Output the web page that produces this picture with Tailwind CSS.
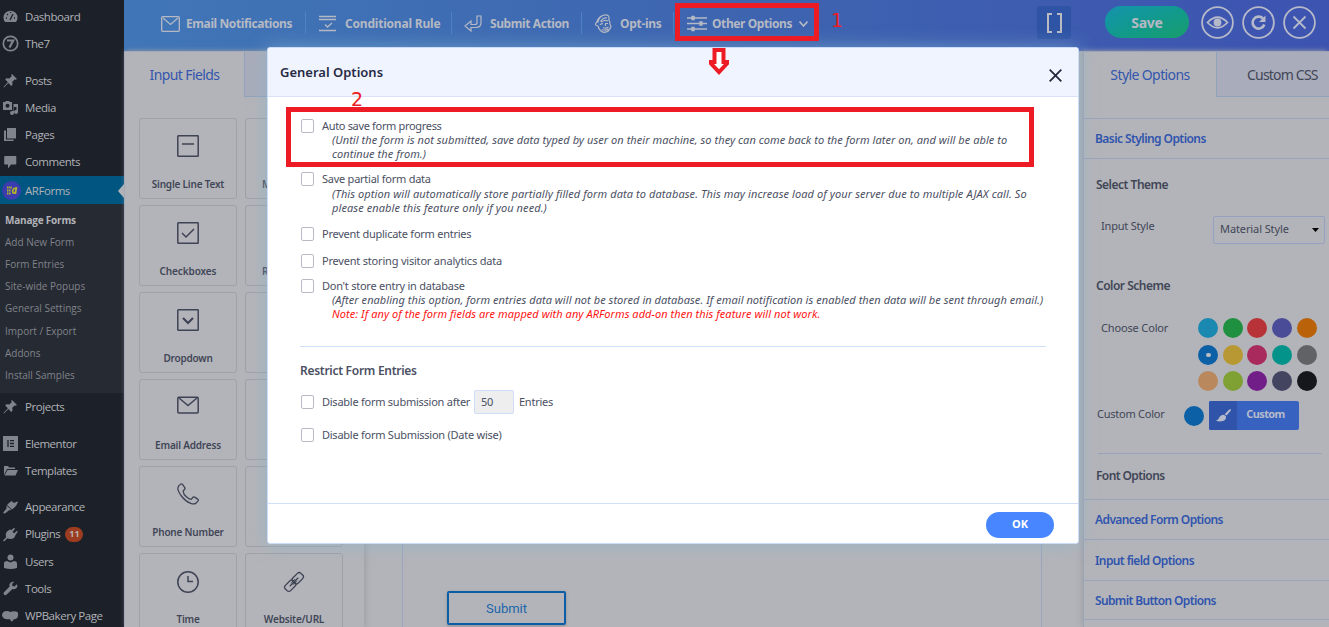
<!DOCTYPE html>
<html lang="en">
<head>
<meta charset="utf-8">
<title>ARForms</title>
<script src="https://cdn.jsdelivr.net/npm/@tailwindcss/browser@4"></script>
</head>
<body class="relative flex h-[627px] w-[1329px] overflow-hidden bg-[#b3b4b9] font-['Noto_Sans',sans-serif] text-[11px] text-[#414657]">

<!-- WordPress menu -->
<nav class="flex h-[627px] w-[124px] shrink-0 flex-col overflow-hidden bg-[#1c2028] pt-[3px] font-['Open_Sans',sans-serif] text-[11.500px] tracking-[-0.45px] text-[#b0b2b7]">
  <a class="flex h-[27px] shrink-0 items-center gap-[7px] pl-[3px]"><svg class="h-[15px] w-[15px]" viewBox="0 0 15 15" fill="#80848c"><path d="M2 13a7 7 0 1 1 11 0z"/><path d="M7 11l3-6M3 9h1M4 5l1 1M7.500 3v1M12 9h-1" stroke="#1c2028" stroke-width="1.300"/></svg>Dashboard</a>
  <a class="flex h-[27px] shrink-0 items-center gap-[6px] pl-[2px]"><svg class="h-[17px] w-[17px]" viewBox="0 0 17 17" fill="none" stroke="#80848c" stroke-width="1.700"><circle cx="8.500" cy="8.500" r="7.200"/><path d="M5 5.500h6.200L7.500 12.500" stroke-width="2.200"/></svg>The7</a>
  <a class="mt-[10px] flex h-[27px] shrink-0 items-center gap-[7px] pl-[3px]"><svg class="h-[15px] w-[15px]" viewBox="0 0 15 15" fill="#80848c"><path d="M9 1l5 5-1.500.8-1-.4-2.200 2.400.2 3-1.300 1.100-2.800-2.900L1 14.500.5 14l4.400-4.700L2.200 6.500l1.200-1.200 2.900.2L8.700 3.200 8.200 2z"/></svg>Posts</a>
  <a class="flex h-[27px] shrink-0 items-center gap-[7px] pl-[3px]"><svg class="h-[15px] w-[15px]" viewBox="0 0 15 15" fill="#80848c"><path d="M0 2h2l1-1h3l1 1h2v8H0z"/><circle cx="4.500" cy="5.800" r="2" fill="#1c2028"/><path d="M10.500 4H15v8a2 2 0 1 1-1.500-2V7h-2.500v6a2 2 0 1 1-2-2h1.500z"/></svg>Media</a>
  <a class="flex h-[27px] shrink-0 items-center gap-[7px] pl-[3px]"><svg class="h-[15px] w-[15px]" viewBox="0 0 15 15" fill="#80848c"><path d="M4 1h9v10.500H4z"/><path d="M1 3.500h2v9h7.500v1.500H1z"/></svg>Pages</a>
  <a class="flex h-[27px] shrink-0 items-center gap-[7px] pl-[3px]"><svg class="h-[15px] w-[15px]" viewBox="0 0 15 15" fill="#80848c"><path d="M2 2h10.500q.8 0 .8.800v7q0 .800-.800.800H8L5 14.500V10.600H2q-.800 0-.800-.800v-7Q1.200 2 2 2z"/></svg>Comments</a>
  <a class="mt-px flex h-[28px] shrink-0 items-center bg-[#005581] pt-px pl-[2px]"><svg class="mr-[4px] h-[19px] w-[19px]" viewBox="0 0 19 19"><circle cx="9.500" cy="9.500" r="9.500" fill="#3b3cae"/><path d="M5 6.500h5M5 9.500h4M5 12.500h4" stroke="#b5b529" stroke-width="1.800" stroke-dasharray="1.500 .6"/><path d="M14.500 6l-1.200 7M13.800 7.500c-3-1.500-4.500 5-1.500 4.500l1.200-1.200" fill="none" stroke="#b5b529" stroke-width="1.700"/></svg>ARForms<svg class="ml-auto h-[14px] w-[6px]" viewBox="0 0 6 14" fill="#b3b4b9"><path d="M6 0v14L0 7z"/></svg></a>
  <div class="flex h-[189px] shrink-0 flex-col bg-[#262a33] pt-[5px] pl-[5px] text-[10px] tracking-[0px] text-[#80838a]">
    <a class="flex h-[22.200px] items-center font-bold tracking-[-0.2px] text-[#b3b4b9]">Manage Forms</a>
    <a class="flex h-[22.200px] items-center">Add New Form</a>
    <a class="flex h-[22.200px] items-center">Form Entries</a>
    <a class="flex h-[22.200px] items-center">Site-wide Popups</a>
    <a class="flex h-[22.200px] items-center">General Settings</a>
    <a class="flex h-[22.200px] items-center">Import / Export</a>
    <a class="flex h-[22.200px] items-center">Addons</a>
    <a class="flex h-[22.200px] items-center">Install Samples</a>
  </div>
  <a class="flex h-[27px] shrink-0 items-center gap-[7px] pl-[3px]"><svg class="h-[15px] w-[15px]" viewBox="0 0 15 15" fill="#80848c"><path d="M9 1l5 5-1.500.8-1-.4-2.200 2.400.2 3-1.300 1.100-2.800-2.900L1 14.500.5 14l4.400-4.700L2.200 6.500l1.200-1.200 2.900.2L8.700 3.200 8.200 2z"/></svg>Projects</a>
  <a class="mt-[10px] flex h-[27px] shrink-0 items-center gap-[7px] pl-[3px]"><svg class="h-[15px] w-[15px]" viewBox="0 0 15 15" fill="#80848c"><path d="M0 0h15v15H0z"/><path d="M5 4v7M7 4.700h4M7 7.500h4M7 10.300h4" stroke="#1c2028" stroke-width="1.300"/></svg>Elementor</a>
  <a class="flex h-[27px] shrink-0 items-center gap-[7px] pl-[3px]"><svg class="h-[15px] w-[15px]" viewBox="0 0 15 15" fill="#80848c"><path d="M1 12V3h4l1 1.500h6V6H4z"/><path d="M4.500 7H15l-2.500 5.500H1.500z"/></svg>Templates</a>
  <a class="mt-[9px] flex h-[27px] shrink-0 items-center gap-[7px] pl-[3px]"><svg class="h-[15px] w-[15px]" viewBox="0 0 15 15" fill="#80848c"><path d="M6 4l2.500-2L11 4l3-1.500 1 .5-1.500 3-1.500 2-3 2.500L4 6z"/><path d="M3.500 6.500l5 4.500-2.500.2L2 14.500q-1.500.3-1.800-1L3.500 9.500z"/></svg>Appearance</a>
  <a class="flex h-[28px] shrink-0 items-center gap-[7px] pl-[3px]"><svg class="h-[15px] w-[15px]" viewBox="0 0 15 15" fill="#80848c"><path d="M6 3l1.500-.5L12.500 8q-1 4-5 4-2 0-3-.8L1 14.500 0 13.500l3.200-3.300Q1.500 5.500 6 3zM8 3.500L11 .8l1 1L9.500 5zM11 6.500l2.800-2.800 1 1L12.500 8z"/></svg>Plugins<span class="-ml-[2px] flex h-[15px] w-[18px] items-center justify-center rounded-full bg-[#9c3d22] text-[9px] font-bold tracking-normal text-[#b9b4b2]">11</span></a>
  <a class="flex h-[27px] shrink-0 items-center gap-[7px] pl-[3px]"><svg class="h-[15px] w-[15px]" viewBox="0 0 15 15" fill="#80848c"><circle cx="7.500" cy="3.500" r="3"/><path d="M1 14V9.500q0-2.500 3-2.500l3.500 1.500L11 7q3 0 3 2.500V14q-6 2-13 0z"/></svg>Users</a>
  <a class="flex h-[27px] shrink-0 items-center gap-[7px] pl-[3px]"><svg class="h-[15px] w-[15px]" viewBox="0 0 15 15" fill="#80848c"><path d="M13.800 3.200L11.500 5.500l-2-.5-.5-2L11.300.8Q8 0 6.600 3q-.4 1.300 0 2.500L.8 11.600q-.8 1.200.3 2.200 1.200.9 2.300 0L9.500 8q4 .7 4.900-2.500.1-1.300-.6-2.300z"/></svg>Tools</a>
  <a class="flex h-[27px] shrink-0 items-center gap-[6px] pl-[2px]"><svg class="h-[15px] w-[17px]" viewBox="0 0 17 15" fill="#80848c"><path d="M0 7.500Q0 3 5 3q2 0 3 1 5-1.500 8 .5v3Q16 11 11.500 11.500q-.5 2-2 2-.8-1.500-2-2.500Q1 12 0 7.500z"/></svg><span class="whitespace-nowrap">WPBakery Page</span></a>
  <span class="-mt-[5px] pl-[25px]">Builder</span>
</nav>

<div class="flex min-w-0 flex-1 flex-col">
  <!-- Toolbar -->
  <header class="flex h-[51px] shrink-0 items-start bg-linear-to-r from-[#4076b7] via-[#3e65b0] to-[#3d53b0] text-[12px] font-bold tracking-[-0.4px] text-[#b5b9c4]">
    <div class="mt-[12px] flex h-[22px] w-[182px] items-center gap-[6px] border-r border-[#4d83c0] pt-px pl-[37px] whitespace-nowrap"><svg class="h-[16px] w-[19px] shrink-0" viewBox="0 0 19 16" fill="none" stroke="#b5b9c4" stroke-width="1.300"><rect x=".7" y=".7" width="17.600" height="14.600" rx="1"/><path d="M2 2l7.500 6.500L17 2"/></svg>Email Notifications</div>
    <div class="mt-[12px] flex h-[22px] w-[146px] items-center gap-[9px] border-r border-[#4d83c0] pt-px pl-[13px] tracking-[-0.2px] whitespace-nowrap"><svg class="h-[17px] w-[17px] shrink-0" viewBox="0 0 17 17" fill="none" stroke="#b5b9c4" stroke-width="1.300"><path d="M0 1.500h17M0 4.500h17M0 15.500h17M6 9.500l2.500 2.500L13 8M0 12.500"/></svg>Conditional Rule</div>
    <div class="mt-[12px] flex h-[22px] w-[130px] items-center gap-[8px] border-r border-[#4d83c0] pt-px pl-[12px] whitespace-nowrap"><svg class="h-[17px] w-[18px] shrink-0" viewBox="0 0 18 17" fill="none" stroke="#b5b9c4" stroke-width="1.200"><path d="M17 1h-4v6.500q0 2-2 2H7V6L1 11l6 5v-3.500h5q5 0 5-5z"/></svg>Submit Action</div>
    <div class="mt-[12px] flex h-[22px] w-[92px] items-center gap-[8px] border-r border-[#4d83c0] pt-px pl-[13px] tracking-[-0.3px] whitespace-nowrap"><svg class="h-[19px] w-[17px] shrink-0" viewBox="0 0 17 19" fill="none" stroke="#b5b9c4" stroke-width="1.200"><path d="M3 12Q-.5 11.500 1 9q1-1.500 2-1Q4 3 8.500 1.300q3-1 4.800.5 1.200 1.500.5 4 1.500 2 1 4.200l1.200 2.500Q14 18.500 9 18.300 4.500 17.500 3 12zM2 7.500Q3.500 2.500 9 1M5.500 7.500Q8 3.500 12 4M6 8q4-2.500 7-1M5 11q1.500-2 3-1M10 9.500h3M8 13.500q3 1.500 5.500-.5M7 15.500q3.500 1.500 6.500-.5M10.500 10v2"/></svg>Opt-ins</div>
    <div class="mt-[12px] flex h-[22px] items-center pt-px pl-[13px] whitespace-nowrap"><svg class="mr-[5px] h-[17px] w-[20px] shrink-0" viewBox="0 0 20 17" fill="#b5b9c4" stroke="#b5b9c4" stroke-width="1.400"><path d="M0 3h20M0 8.500h20M0 14h20"/><path d="M5 1.500h2v3H5zM13 7h2v3h-2zM5 12.500h2v3H5z"/></svg>Other Options<svg class="ml-[7px] h-[8px] w-[9px]" viewBox="0 0 9 8" fill="none" stroke="#b5b9c4" stroke-width="1.700"><path d="M.5 1.500l4 4.500 4-4.500"/></svg></div>
    <div class="mt-[6px] mr-[34px] ml-auto flex h-[33px] w-[34px] items-center justify-center rounded-[3px] bg-[#2f54a5]"><svg class="h-[20px] w-[17px]" viewBox="0 0 17 20" fill="none" stroke="#b9bbc2" stroke-width="2"><path d="M6 1H2v18h4M11 1h4v18h-4"/></svg></div>
    <div class="mt-[6px] flex h-[32px] w-[84px] items-center justify-center rounded-full bg-linear-to-br from-[#1593ad] to-[#189e6a] text-[14px] tracking-[-0.3px]">Save</div>
    <svg class="mt-[6px] ml-[12px] h-[33px] w-[33px]" viewBox="0 0 33 33" fill="none" stroke="#b5b9c9" stroke-width="1.800"><circle cx="16.500" cy="16.500" r="15.400"/><path d="M6.500 16.500Q16.500 6 26.500 16.500 16.500 27 6.500 16.500z"/><circle cx="16.500" cy="16.500" r="3" fill="#b5b9c9"/></svg>
    <svg class="mt-[6px] ml-[8px] h-[33px] w-[33px]" viewBox="0 0 33 33" fill="none" stroke="#b5b9c9" stroke-width="1.800"><circle cx="16.500" cy="16.500" r="15.400"/><path d="M21 12.500a6 6 0 1 0 1.300 6" stroke-width="2.600"/><path d="M23.500 9.500v6.500h-6.500z" fill="#b5b9c9" stroke="none"/></svg>
    <svg class="mt-[6px] mr-[13px] ml-[8px] h-[33px] w-[33px]" viewBox="0 0 33 33" fill="none" stroke="#b5b9c9" stroke-width="1.800"><circle cx="16.500" cy="16.500" r="15.400"/><path d="M10.500 10.500l12 12M22.500 10.500l-12 12"/></svg>
  </header>

  <div class="flex min-h-0 flex-1">
    <!-- Field palette -->
    <section class="relative flex w-[240px] shrink-0 flex-col overflow-visible border-t border-l border-[#a4a9b5] shadow-[2px_0_5px_#9fa1a8]">
      <div class="flex h-[45px] shrink-0">
        <div class="flex w-[119px] items-center justify-center text-[14px] tracking-[-0.6px] text-[#3356ad]"><span>Input Fields</span></div>
        <div class="flex-1 border-b border-l border-[#91a3bb] bg-[#a9acba]"></div>
      </div>
      <div class="mt-[21px] ml-[14px] grid grid-cols-[98px_98px] gap-x-[8px] gap-y-[6px] text-[10px] font-semibold tracking-[-0.2px]">
        <div class="flex h-[81px] flex-col items-center rounded-[3px] border border-[#9fa1a8] pt-[16px]"><svg class="h-[22px] w-[22px]" viewBox="0 0 22 22" fill="none" stroke="#3e4355" stroke-width="1.500"><rect x=".8" y=".8" width="20.400" height="20.400" rx=".5"/><path d="M5 9h12"/></svg><span class="mt-[20px]">Single Line Text</span></div>
        <div class="flex h-[81px] flex-col rounded-[3px] border border-[#9fa1a8] pt-[58px] pl-[16px]">M</div>
        <div class="flex h-[81px] flex-col items-center rounded-[3px] border border-[#9fa1a8] pt-[16px]"><svg class="h-[22px] w-[22px]" viewBox="0 0 22 22" fill="none" stroke="#3e4355" stroke-width="1.500"><rect x=".8" y=".8" width="20.400" height="20.400" rx=".5"/><path d="M5 11l4 4 8-8"/></svg><span class="mt-[20px] tracking-[-0.1px]">Checkboxes</span></div>
        <div class="flex h-[81px] flex-col rounded-[3px] border border-[#9fa1a8] pt-[58px] pl-[16px]">R</div>
        <div class="flex h-[81px] flex-col items-center rounded-[3px] border border-[#9fa1a8] pt-[16px]"><svg class="h-[22px] w-[22px]" viewBox="0 0 22 22" fill="none" stroke="#3e4355" stroke-width="1.500"><rect x=".8" y=".8" width="20.400" height="20.400" rx=".5"/><path d="M6 9l5 5 5-5" stroke-width="2.200"/></svg><span class="mt-[20px]">Dropdown</span></div>
        <div class="h-[81px] rounded-[3px] border border-[#9fa1a8]"></div>
        <div class="flex h-[81px] flex-col items-center rounded-[3px] border border-[#9fa1a8] pt-[16px]"><svg class="h-[18px] w-[22px]" viewBox="0 0 22 18" fill="none" stroke="#3e4355" stroke-width="1.500"><rect x=".8" y="1.300" width="20.400" height="15.800" rx="1"/><path d="M2 2l9 7.500L20 2"/></svg><span class="mt-[24px]">Email Address</span></div>
        <div class="h-[81px] rounded-[3px] border border-[#9fa1a8]"></div>
        <div class="flex h-[81px] flex-col items-center rounded-[3px] border border-[#9fa1a8] pt-[16px]"><svg class="h-[22px] w-[22px]" viewBox="0 0 22 22" fill="none" stroke="#3e4355" stroke-width="1.300"><path d="M3.500 1.200q1.200-.8 2 .2l2.300 3.200q.6 1-.3 1.900L6.300 7.800q-.4 3 3.300 6.300 3 2.700 4.800 2.200l1.300-1.800q.8-1 2-.4l3 2q1.200.9.200 2l-1.800 2q-2 1.400-5.300.2Q8 18 4 12.500.8 7.800.8 5.500.8 3 3.500 1.200z"/></svg><span class="mt-[20px]">Phone Number</span></div>
        <div class="h-[81px] rounded-[3px] border border-[#9fa1a8]"></div>
        <div class="flex h-[81px] flex-col items-center rounded-[3px] border border-[#9fa1a8] pt-[17px]"><svg class="h-[22px] w-[22px]" viewBox="0 0 22 22" fill="none" stroke="#3e4355" stroke-width="1.500"><circle cx="11" cy="11" r="10.200"/><path d="M11 5v5.500h5"/></svg><span class="mt-[19px]">Time</span></div>
        <div class="flex h-[81px] flex-col items-center rounded-[3px] border border-[#9fa1a8] pt-[17px]"><svg class="h-[22px] w-[22px]" viewBox="0 0 22 22" fill="none" stroke="#3e4355" stroke-width="1.300"><g transform="rotate(-45 11 11)"><rect x="10.500" y="7.300" width="11.500" height="7.400" rx="2.500"/><rect x="0" y="7.300" width="11.500" height="7.400" rx="2.500"/><path d="M5 11h12"/><path d="M8 9.800h6M8 12.200h6" stroke-width=".9"/></g></svg><span class="mt-[19px]">Website/URL</span></div>
      </div>
    </section>

    <!-- Form canvas -->
    <main class="flex flex-1 border-t border-[#a4a9b5] pr-[41px] pl-[38px]">
      <div class="flex flex-1 items-start border-x border-[#9ba5bf] pt-[539px] pl-[44px]">
        <button class="h-[34px] w-[119px] rounded-[2px] border-2 border-[#0b5da5] pt-px font-[Roboto,sans-serif] text-[13px] text-[#1b66ac] shadow-[0_1px_3px_#8b8f98]">Submit</button>
      </div>
    </main>

    <!-- Style panel -->
    <aside class="flex w-[246px] shrink-0 flex-col border-t border-l border-[#9ca4b6] shadow-[-2px_0_5px_#a2a4ab]">
      <div class="flex h-[45px] shrink-0 text-[14px] tracking-[-0.6px]">
        <div class="flex w-[132px] items-center justify-center text-[#3356ad]">Style Options</div>
        <div class="flex flex-1 items-center border-b border-l border-[#91a3bb] bg-[#a9acba] pl-[30px] tracking-[-0.8px] whitespace-nowrap text-[#414657]">Custom CSS</div>
      </div>
      <div class="mt-[21px] flex h-[41px] shrink-0 items-center border-y border-[#99a3ba] pl-[11px] text-[12px] font-semibold tracking-[-0.57px] text-[#3054ad]">Basic Styling Options</div>
      <div class="mt-[17px] ml-[12px] h-[18px] text-[12px] leading-[18px] font-semibold tracking-[-0.5px]">Select Theme</div>
      <div class="mt-[22px] flex h-[28px] pl-[17px]">
        <span class="w-[112px] leading-[20px] tracking-[-0.2px]">Input Style</span>
        <div class="flex w-[112px] items-center justify-between rounded-[2px] border border-[#96a1c2] pr-[5px] pb-px pl-[6px] tracking-[-0.1px] whitespace-nowrap">Material Style<svg class="h-[4px] w-[7px]" viewBox="0 0 7 4"><path d="M0 0h7L3.500 4z"/></svg></div>
      </div>
      <div class="mt-[33px] ml-[12px] h-[18px] text-[12px] leading-[18px] font-semibold tracking-[-0.5px]">Color Scheme</div>
      <div class="mt-[23px] flex pl-[17px]">
        <span class="w-[97px] leading-[20px] tracking-[-0.15px]">Choose Color</span>
        <div class="grid grid-cols-5 gap-x-[4.700px] gap-y-[6.500px]">
          <i class="h-5 w-5 rounded-full bg-[#1b88b1]"></i><i class="h-5 w-5 rounded-full bg-[#1f8f40]"></i><i class="h-5 w-5 rounded-full bg-[#b83338]"></i><i class="h-5 w-5 rounded-full bg-[#4b4c98]"></i><i class="h-5 w-5 rounded-full bg-[#ba620a]"></i>
          <i class="flex h-5 w-5 items-center justify-center rounded-full bg-[#0b60a6]"><b class="h-[4px] w-[5px] rounded-full bg-[#b9bcc2]"></b></i><i class="h-5 w-5 rounded-full bg-[#b89832]"></i><i class="h-5 w-5 rounded-full bg-[#a92b5d]"></i><i class="h-5 w-5 rounded-full bg-[#03938a]"></i><i class="h-5 w-5 rounded-full bg-[#606266]"></i>
          <i class="h-5 w-5 rounded-full bg-[#b9885c]"></i><i class="h-5 w-5 rounded-full bg-[#7fa032]"></i><i class="h-5 w-5 rounded-full bg-[#721e89]"></i><i class="h-5 w-5 rounded-full bg-[#434460]"></i><i class="h-5 w-5 rounded-full bg-[#15171c]"></i>
        </div>
      </div>
      <div class="mt-[10px] flex h-[29px] pl-[13px]">
        <span class="w-[87px] leading-[26px] tracking-[-0.25px]">Custom Color</span>
        <i class="mt-[5px] h-5 w-5 rounded-full bg-[#0b60a6]"></i>
        <div class="ml-[5px] flex w-[90px] items-center overflow-hidden rounded-[2px] bg-[#3762bf] font-bold text-[#b5bbcb]">
          <span class="flex h-full w-[28px] items-center justify-center bg-[#2f54a9]"><svg class="h-[13px] w-[15px]" viewBox="0 0 15 13" fill="#b5bbcb"><path d="M14.500.3q.8.500.2 1.500L10.500 6.500 8.700 5.200 13 .7q.8-.7 1.500-.4zM8 5.800l1.900 1.500Q10.500 11 7 12q-4 1-7-.5 2-.3 2.700-2Q4 6 8 5.800z"/></svg></span>
          <span class="flex-1 pr-[5px] pb-[3px] text-center tracking-[-0.6px]">Custom</span>
        </div>
      </div>
      <div class="mt-[23px] mr-[7px] ml-[14px] border-t border-[#99a3ba]"></div>
      <div class="flex h-[45px] shrink-0 items-center pb-[2px] pl-[12px] text-[12px] font-semibold tracking-[-0.6px]">Font Options</div>
      <div class="flex h-[40px] shrink-0 items-center border-t border-[#99a3ba] pl-[11px] text-[12px] font-semibold tracking-[-0.6px] text-[#3054ad]">Advanced Form Options</div>
      <div class="flex h-[41px] shrink-0 items-center border-t border-[#99a3ba] pt-px pl-[11px] text-[12px] font-semibold tracking-[-0.6px] text-[#3054ad]">Input field Options</div>
      <div class="flex h-[40px] shrink-0 items-center border-y border-[#99a3ba] pt-px pl-[11px] text-[12px] font-semibold tracking-[-0.65px] text-[#3054ad]">Submit Button Options</div>
    </aside>
  </div>
</div>

<!-- General Options dialog -->
<div class="absolute top-[47px] left-[267px] flex h-[497px] w-[812px] flex-col overflow-hidden rounded-[3px] border border-[#cbdcfa] bg-white text-[#4b5063] shadow-[0_0_18px_#86b6cf99]">
  <div class="flex h-[49px] shrink-0 items-center justify-between border-b border-[#d8e3fa] bg-[#f0f4ff] pr-[16px] pl-[12px] text-[13px] font-semibold text-[#272b44]"><span class="pt-[2px]">General Options</span><svg class="mt-[7px] h-[13px] w-[13px]" viewBox="0 0 13 13" stroke="#23283d" stroke-width="1.800"><path d="M.7.700l11.600 11.600M12.300.7L.7 12.300"/></svg></div>
  <div class="flex flex-1 flex-col pt-[22px] pl-[33px] tracking-[-0.25px] whitespace-nowrap">
    <label class="flex h-[14px] shrink-0 items-center gap-[8px] tracking-[-0.33px]"><i class="h-[14px] w-[13px] rounded-[2px] border border-[#b9bcc8]"></i>Auto save form progress</label>
    <p class="ml-[31px] h-[28px] leading-[14px] tracking-[0.05px] italic">(Until the form is not submitted, save data typed by user on their machine, so they can come back to the form later on, and will be able to<br>continue the from.)</p>
    <label class="mt-[11px] flex h-[14px] shrink-0 items-center gap-[8px]"><i class="h-[14px] w-[13px] rounded-[2px] border border-[#b9bcc8]"></i>Save partial form data</label>
    <p class="mt-px ml-[31px] h-[28px] leading-[14px] tracking-[0.09px] italic">(This option will automatically store partially filled form data to database. This may increase load of your server due to multiple AJAX call. So<br>please enable this feature only if you need.)</p>
    <label class="mt-[12px] flex h-[14px] shrink-0 items-center gap-[8px]"><i class="h-[14px] w-[13px] rounded-[2px] border border-[#b9bcc8]"></i>Prevent duplicate form entries</label>
    <label class="mt-[13px] flex h-[14px] shrink-0 items-center gap-[8px] tracking-[-0.2px]"><i class="h-[14px] w-[13px] rounded-[2px] border border-[#b9bcc8]"></i>Prevent storing visitor analytics data</label>
    <label class="mt-[11px] flex h-[14px] shrink-0 items-center gap-[8px]"><i class="h-[14px] w-[13px] rounded-[2px] border border-[#b9bcc8]"></i>Don't store entry in database</label>
    <p class="ml-[31px] h-[28px] leading-[14px] tracking-[0.05px] italic">(After enabling this option, form entries data will not be stored in database. If email notification is enabled then data will be sent through email.)<br><span class="text-[#ff1414]">Note: If any of the form fields are mapped with any ARForms add-on then this feature will not work.</span></p>
    <div class="mt-[25px] mr-[32px] -ml-px border-t border-[#cfdffb]"></div>
    <h3 class="mt-[15px] -ml-px h-[18px] text-[12px] leading-[18px] font-semibold tracking-[-0.28px]">Restrict Form Entries</h3>
    <label class="mt-[10px] flex h-[24px] shrink-0 items-center"><i class="mr-[8px] h-[14px] w-[13px] rounded-[2px] border border-[#b9bcc8]"></i><span class="w-[152px] shrink-0">Disable form submission after</span><span class="mr-[5px] flex h-[24px] w-[40px] shrink-0 items-center rounded-[2px] border border-[#d0defa] bg-[#eeeeef] pl-[6px]">50</span>Entries</label>
    <label class="mt-[14px] flex h-[14px] shrink-0 items-center gap-[8px]"><i class="h-[14px] w-[13px] rounded-[2px] border border-[#b9bcc8]"></i>Disable form Submission (Date wise)</label>
  </div>
  <div class="flex h-[40px] shrink-0 items-center justify-end border-t border-[#d0defa] pt-[3px] pr-[24px]"><button class="h-[26px] w-[68px] rounded-full bg-[#4786ff] pb-[2px] font-bold text-white">OK</button></div>
</div>

<!-- Annotations -->
<div class="absolute top-[3px] left-[675px] h-[38px] w-[144px] border-5 border-[#ed1c24]"></div>
<div class="absolute top-[107px] left-[286px] h-[60px] w-[748px] border-5 border-[#ed1c24]"></div>
<span class="absolute top-[7px] left-[831px] font-['DejaVu_Sans',sans-serif] text-[19px] leading-[26px] text-[#ed1c24]">1</span>
<span class="absolute top-[86px] left-[351px] font-['DejaVu_Sans',sans-serif] text-[19px] leading-[26px] text-[#ed1c24]">2</span>
<svg class="absolute top-[48px] left-[707px] h-[27px] w-[24px]" viewBox="0 0 24 27" fill="white" stroke="#ed1c24" stroke-width="4"><path d="M7.500 2h9v12H20v1.500L12 24l-8-8.500V14h3.500z"/></svg>
</body>
</html>
